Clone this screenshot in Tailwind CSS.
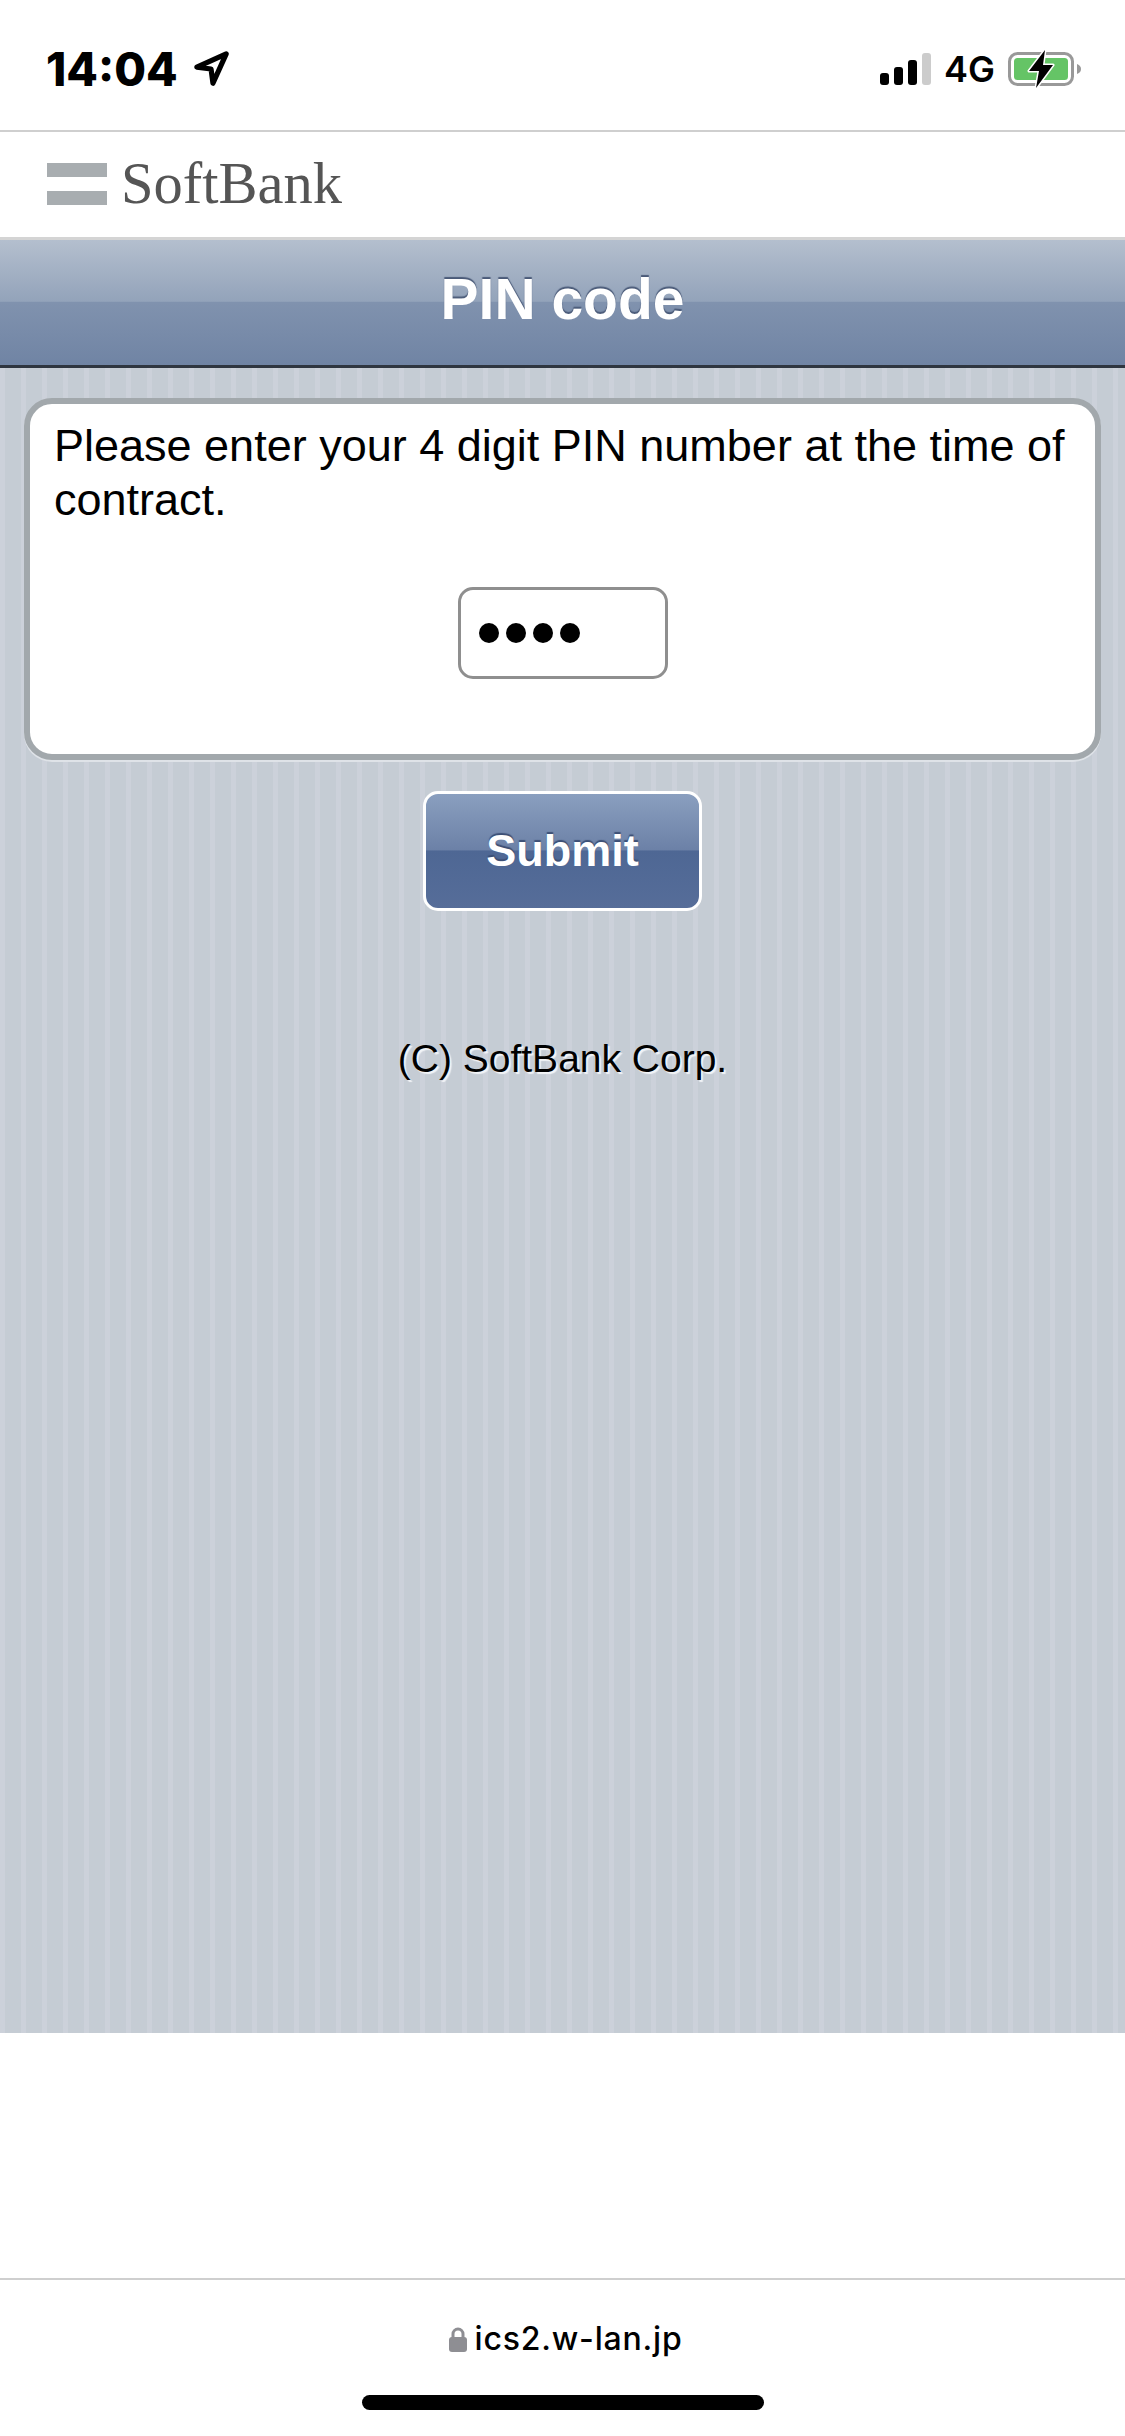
<!DOCTYPE html>
<html lang="en">
<head>
    <meta charset="UTF-8">
    <title>PIN code</title>
    <script src="https://cdn.jsdelivr.net/npm/@tailwindcss/browser@4"></script>
</head>
<body class="bg-white">
<div class="w-[1125px] h-[2436px] flex flex-col overflow-hidden font-['Liberation_Sans',sans-serif] text-black">

    <!-- status bar -->
    <div class="h-[132px] shrink-0 border-b-2 border-[#cfcfcf] flex items-start justify-between pt-[47px] pl-[46px] pr-[43px] font-[Inter,sans-serif]">
        <div class="flex items-center gap-[16px] h-[44px]">
            <span class="text-[46px] font-extrabold leading-none">14:04</span>
            <svg class="w-[36px] h-[36px]" viewBox="0 0 38 38" fill="none" stroke="#000" stroke-width="5.5" stroke-linejoin="round">
                <path d="M3 17 L34 3 L20 34 L18 19 Z"/>
            </svg>
        </div>
        <div class="flex items-center h-[44px]">
            <svg class="w-[51px] h-[32px]" viewBox="0 0 51 32">
                <rect x="0" y="20" width="9" height="12" rx="3"/>
                <rect x="14" y="14" width="9" height="18" rx="3"/>
                <rect x="28" y="7" width="9" height="25" rx="3"/>
                <rect x="42" y="0" width="9" height="32" rx="3" fill="#cccccc"/>
            </svg>
            <span class="ml-[13px] text-[36px] font-semibold leading-none">4G</span>
            <svg class="ml-[13px] w-[74px] h-[38px]" viewBox="0 0 74 38">
                <rect x="1.5" y="3.5" width="63" height="31" rx="8" fill="none" stroke="#999999" stroke-width="3"/>
                <rect x="6" y="8" width="54" height="22" rx="3.5" fill="#65c466"/>
                <path d="M69 14 C72 15 73 17 73 19 C73 21 72 23 69 24 Z" fill="#999999"/>
                <path d="M37 0 L21 21 L31 21 L28 38 L45 15 L35 15 Z" fill="#000" stroke="#fff" stroke-width="3" stroke-linejoin="round" paint-order="stroke"/>
            </svg>
        </div>
    </div>

    <!-- logo -->
    <div class="h-[105px] shrink-0 flex items-center pl-[47px] pb-[1px]">
        <div class="w-[60px] flex flex-col gap-[14px] mt-[-1px]">
            <div class="h-[14px] bg-[#a8adb0]"></div>
            <div class="h-[14px] bg-[#a8adb0]"></div>
        </div>
        <span class="ml-[14px] font-['Liberation_Serif',serif] text-[58.5px] leading-none text-[#555555]">SoftBank</span>
    </div>

    <!-- title -->
    <div class="h-[131px] shrink-0 border-t-[3px] border-t-[#d4d4d4] border-b-[3px] border-b-[#2f3640] flex items-center justify-center pb-[6px] bg-[linear-gradient(to_bottom,#b4bfce_0%,#93a3ba_49%,#8092ae_50%,#7084a4_100%)]">
        <h1 class="text-[57px] font-bold leading-none text-white [text-shadow:0_-2px_1px_#4a5a78]">PIN code</h1>
    </div>

    <!-- striped page -->
    <div class="h-[1665px] shrink-0 flex flex-col items-center pt-[30px] bg-[#c5ccd4] bg-[repeating-linear-gradient(to_right,#ccd1da_0px,#ccd1da_5px,#c5ccd4_5px,#c5ccd4_21px)]">
        <div class="w-[1077px] h-[362px] bg-white border-[6px] border-[#a2a8ac] rounded-[28px] shadow-[0_2px_0_#dfe3e8] pt-[15px] px-[24px]">
            <p class="text-[45px] leading-[54px]">Please enter your 4 digit PIN number at the time of contract.</p>
            <div class="mt-[60px] w-[210px] h-[92px] mx-auto border-[3px] border-[#8f8f8f] rounded-[15px] flex items-center gap-[7px] pl-[18px]">
                <span class="w-[20px] h-[20px] rounded-full bg-black"></span>
                <span class="w-[20px] h-[20px] rounded-full bg-black"></span>
                <span class="w-[20px] h-[20px] rounded-full bg-black"></span>
                <span class="w-[20px] h-[20px] rounded-full bg-black"></span>
            </div>
        </div>

        <button class="mt-[31px] w-[279px] h-[120px] border-[3px] border-white rounded-[15px] text-[45px] font-bold text-white [text-shadow:0_-2px_1px_#3c4f75] bg-[linear-gradient(to_bottom,#8a9fbf_0%,#6c81a7_49%,#4e6794_50%,#566d99_100%)]">Submit</button>

        <p class="mt-[128px] text-[39px] leading-none [text-shadow:2px_2px_1px_#f2f4f7]">(C) SoftBank Corp.</p>
    </div>

    <!-- toolbar -->
    <div class="h-[247px] shrink-0 border-b-2 border-[#cfcfcf]"></div>
    <div class="flex-1 relative flex flex-col items-center font-[Inter,sans-serif]">
        <div class="flex items-center gap-[8px] mt-[43px] ml-[6px]">
            <svg class="w-[18px] h-[25px]" viewBox="0 0 18 25">
                <path d="M4 11 V7 a5 5 0 0 1 10 0 V11" fill="none" stroke="#8e8e93" stroke-width="3"/>
                <rect x="0" y="10" width="18" height="15" rx="3" fill="#8e8e93"/>
            </svg>
            <span class="text-[32px] font-medium leading-none tracking-[0.8px]">ics2.w-lan.jp</span>
        </div>
        <div class="absolute left-[362px] top-[115px] w-[402px] h-[15px] rounded-full bg-black"></div>
    </div>
</div>
</body>
</html>
